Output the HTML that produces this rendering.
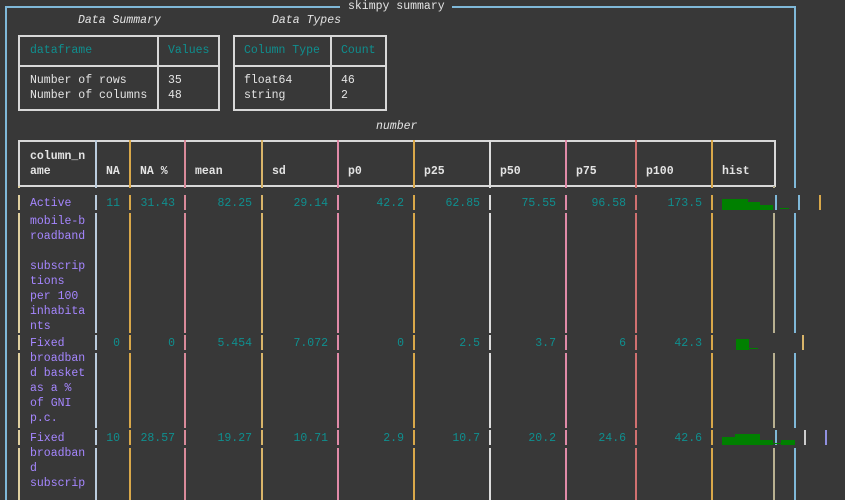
<!DOCTYPE html>
<html><head><style>
html,body{margin:0;padding:0;background:#383838;width:845px;height:500px;overflow:hidden}
body{position:relative;font-family:"Liberation Mono","DejaVu Sans Mono",monospace;font-size:11.5px;color:#e4e4e4}
.t{position:absolute;white-space:pre;line-height:15px}
.i{font-style:italic}
.b{font-weight:bold}
.c{color:#0f8f8f}
.p{color:#a586ff}
.r{text-align:right}
.box{position:absolute;border:2px solid #d8d8d8;box-sizing:border-box}
.v{position:absolute;width:2px}
.h{position:absolute;background:#d8d8d8;height:2px}
.g{position:absolute;background:#008000}
</style></head><body>
<!-- outer frame -->
<div style="position:absolute;left:5px;top:6px;width:335px;height:2px;background:#7fb8d8"></div>
<div style="position:absolute;left:452px;top:6px;width:343px;height:2px;background:#7fb8d8"></div>
<div style="position:absolute;left:5px;top:6px;width:2px;height:494px;background:#7fb8d8"></div>
<div style="position:absolute;left:794px;top:6px;width:2px;height:184px;background:#7fb8d8"></div>
<div class="t" style="left:348px;top:-1px">skimpy summary</div>

<div class="t i" style="left:78px;top:13px">Data Summary</div>
<div class="t i" style="left:272px;top:13px">Data Types</div>

<div class="box" style="left:18px;top:35px;width:202px;height:76px"></div>
<div class="h" style="left:18px;top:65px;width:202px"></div>
<div class="v" style="left:157px;top:35px;height:76px;background:#d8d8d8"></div>
<div class="t c" style="left:30px;top:43px">dataframe</div>
<div class="t c" style="left:168px;top:43px">Values</div>
<div class="t" style="left:30px;top:73px">Number of rows
Number of columns</div>
<div class="t" style="left:168px;top:73px">35
48</div>

<div class="box" style="left:233px;top:35px;width:154px;height:76px"></div>
<div class="h" style="left:233px;top:65px;width:154px"></div>
<div class="v" style="left:330px;top:35px;height:76px;background:#d8d8d8"></div>
<div class="t c" style="left:244px;top:43px">Column Type</div>
<div class="t c" style="left:341px;top:43px">Count</div>
<div class="t" style="left:244px;top:73px">float64
string</div>
<div class="t" style="left:341px;top:73px">46
2</div>

<div class="t i" style="left:376px;top:119px">number</div>

<!-- big table header -->
<div class="box" style="left:18px;top:140px;width:758px;height:47px"></div>
<div class="t b" style="left:30px;top:149px">column_n
ame</div>
<div class="t b" style="left:106px;top:164px">NA</div>
<div class="t b" style="left:140px;top:164px">NA %</div>
<div class="t b" style="left:195px;top:164px">mean</div>
<div class="t b" style="left:272px;top:164px">sd</div>
<div class="t b" style="left:348px;top:164px">p0</div>
<div class="t b" style="left:424px;top:164px">p25</div>
<div class="t b" style="left:500px;top:164px">p50</div>
<div class="t b" style="left:576px;top:164px">p75</div>
<div class="t b" style="left:646px;top:164px">p100</div>
<div class="t b" style="left:722px;top:164px">hist</div>

<!-- vertical lines -->
<div class="v" style="left:95px;top:140px;height:360px;background:#bcd"></div>
<div class="v" style="left:129px;top:140px;height:360px;background:#d9a84a"></div>
<div class="v" style="left:184px;top:140px;height:360px;background:#d98a9a"></div>
<div class="v" style="left:261px;top:140px;height:360px;background:#d9b56a"></div>
<div class="v" style="left:337px;top:140px;height:360px;background:#e08aa8"></div>
<div class="v" style="left:413px;top:140px;height:360px;background:#d9a84a"></div>
<div class="v" style="left:489px;top:140px;height:360px;background:#ddd"></div>
<div class="v" style="left:565px;top:140px;height:360px;background:#e08aa8"></div>
<div class="v" style="left:635px;top:140px;height:360px;background:#d07070"></div>
<div class="v" style="left:711px;top:140px;height:360px;background:#d9a84a"></div>
<div class="v" style="left:18px;top:186px;height:314px;background:#e0d0a0"></div>
<div class="v" style="left:773px;top:186px;height:314px;background:#b8b090"></div>
<div class="v" style="left:794px;top:186px;height:314px;background:#7fb8d8"></div>
<!-- row gaps -->
<div style="position:absolute;left:0;top:210px;width:845px;height:3px;background:#383838"></div>
<div style="position:absolute;left:0;top:333px;width:845px;height:2px;background:#383838"></div>
<div style="position:absolute;left:0;top:350px;width:845px;height:3px;background:#383838"></div>
<div style="position:absolute;left:0;top:428px;width:845px;height:2px;background:#383838"></div>
<div style="position:absolute;left:0;top:445px;width:845px;height:3px;background:#383838"></div>
<div style="position:absolute;left:0;top:188px;width:845px;height:7px;background:#383838"></div>
<div class="v" style="left:5px;top:188px;height:312px;background:#7fb8d8"></div>
<div class="v" style="left:798px;top:195px;height:15px;background:#7fb8d8"></div>
<div class="v" style="left:819px;top:195px;height:15px;background:#d9a84a"></div>
<div class="v" style="left:781px;top:335px;height:15px;background:#d9b56a"></div>
<div class="v" style="left:802px;top:335px;height:15px;background:#d9b56a"></div>
<div class="v" style="left:804px;top:430px;height:15px;background:#ccc"></div>
<div class="v" style="left:825px;top:430px;height:15px;background:#9090e0"></div>
<div style="position:absolute;left:773px;top:335px;width:24px;height:15px;background:#383838"></div>
<div style="position:absolute;left:773px;top:430px;width:24px;height:15px;background:#383838"></div>
<div style="position:absolute;left:773px;top:195px;width:24px;height:15px;background:#383838"></div>
<div class="v" style="left:775px;top:195px;height:15px;background:#7fb8d8"></div>
<div class="v" style="left:775px;top:430px;height:15px;background:#7fb8d8"></div>

<!-- names -->
<div class="t p" style="left:30px;top:196px">Active</div>
<div class="t p" style="left:30px;top:214px">mobile-b
roadband

subscrip
tions
per 100
inhabita
nts</div>
<div class="t p" style="left:30px;top:336px">Fixed</div>
<div class="t p" style="left:30px;top:351px">broadban
d basket
as a %
of GNI
p.c.</div>
<div class="t p" style="left:30px;top:431px">Fixed</div>
<div class="t p" style="left:30px;top:446px">broadban
d
subscrip</div>

<!-- numbers: right edges -->
<div class="t c r" style="left:95px;width:25px;top:196px">11
</div>
<div class="t c r" style="left:129px;width:46px;top:196px">31.43</div>
<div class="t c r" style="left:184px;width:68px;top:196px">82.25</div>
<div class="t c r" style="left:261px;width:67px;top:196px">29.14</div>
<div class="t c r" style="left:337px;width:67px;top:196px">42.2</div>
<div class="t c r" style="left:413px;width:67px;top:196px">62.85</div>
<div class="t c r" style="left:489px;width:67px;top:196px">75.55</div>
<div class="t c r" style="left:565px;width:61px;top:196px">96.58</div>
<div class="t c r" style="left:635px;width:67px;top:196px">173.5</div>

<div class="t c r" style="left:95px;width:25px;top:336px">0</div>
<div class="t c r" style="left:129px;width:46px;top:336px">0</div>
<div class="t c r" style="left:184px;width:68px;top:336px">5.454</div>
<div class="t c r" style="left:261px;width:67px;top:336px">7.072</div>
<div class="t c r" style="left:337px;width:67px;top:336px">0</div>
<div class="t c r" style="left:413px;width:67px;top:336px">2.5</div>
<div class="t c r" style="left:489px;width:67px;top:336px">3.7</div>
<div class="t c r" style="left:565px;width:61px;top:336px">6</div>
<div class="t c r" style="left:635px;width:67px;top:336px">42.3</div>

<div class="t c r" style="left:95px;width:25px;top:431px">10</div>
<div class="t c r" style="left:129px;width:46px;top:431px">28.57</div>
<div class="t c r" style="left:184px;width:68px;top:431px">19.27</div>
<div class="t c r" style="left:261px;width:67px;top:431px">10.71</div>
<div class="t c r" style="left:337px;width:67px;top:431px">2.9</div>
<div class="t c r" style="left:413px;width:67px;top:431px">10.7</div>
<div class="t c r" style="left:489px;width:67px;top:431px">20.2</div>
<div class="t c r" style="left:565px;width:61px;top:431px">24.6</div>
<div class="t c r" style="left:635px;width:67px;top:431px">42.6</div>

<!-- histograms -->
<div class="g" style="left:722px;top:199px;width:26px;height:11px"></div>
<div class="g" style="left:748px;top:202px;width:12px;height:8px"></div>
<div class="g" style="left:760px;top:205px;width:13px;height:5px"></div>
<div class="g" style="left:780px;top:208px;width:9px;height:1px"></div>
<div class="g" style="left:736px;top:339px;width:13px;height:11px"></div>
<div class="g" style="left:749px;top:348px;width:9px;height:1px"></div>
<div class="g" style="left:722px;top:437px;width:13px;height:8px"></div>
<div class="g" style="left:735px;top:434px;width:25px;height:11px"></div>
<div class="g" style="left:760px;top:440px;width:13px;height:5px"></div>
<div class="g" style="left:773px;top:443px;width:8px;height:1px"></div>
<div class="g" style="left:781px;top:440px;width:14px;height:5px"></div>
</body></html>
